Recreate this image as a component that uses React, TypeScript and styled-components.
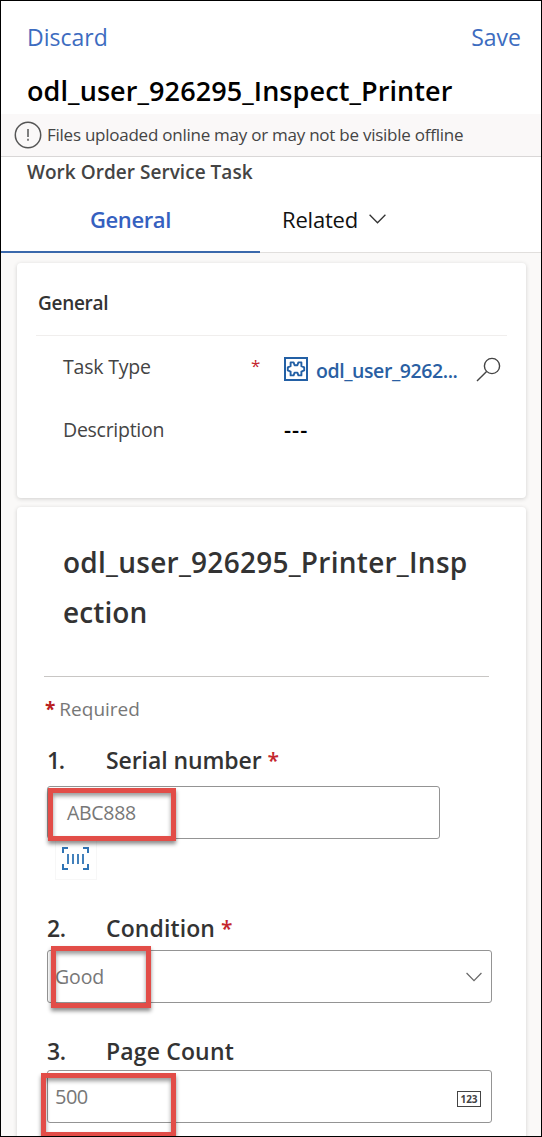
import React from "react";
import styled, { createGlobalStyle } from "styled-components";

const GlobalStyle = createGlobalStyle`
  * { box-sizing: border-box; }
  body { margin: 0; background: #fff; font-family: "Open Sans", "Noto Sans", sans-serif; }
`;

const Frame = styled.div`
  width: 542px;
  height: 1137px;
  border: 1px solid #000;
  overflow: hidden;
  background: #fff;
  display: flex;
  flex-direction: column;
`;

const Text = styled.span<{ $size: number; $line?: number; $track?: number; $weight?: number; $color?: string }>`
  display: block;
  white-space: nowrap;
  font-size: ${(p) => p.$size}px;
  line-height: ${(p) => p.$line ?? 26}px;
  letter-spacing: ${(p) => p.$track ?? 0}px;
  font-weight: ${(p) => p.$weight ?? 400};
  color: ${(p) => p.$color ?? "#444"};
`;

const Header = styled.header`
  height: 113px;
  flex: none;
  padding: 20px 20px 0 26px;
`;

const Actions = styled.div`
  display: flex;
  justify-content: space-between;
  margin-bottom: 19px;
`;

const Notice = styled.div`
  height: 43px;
  flex: none;
  display: flex;
  align-items: center;
  gap: 5px;
  padding-left: 13px;
  background: #faf8f8;
  border-bottom: 1px solid #d9d7d7;
`;

const Entity = styled.div`
  height: 28px;
  flex: none;
  padding: 2px 0 0 26px;
`;

const Tabs = styled.nav`
  height: 68px;
  flex: none;
  display: flex;
  border-bottom: 1px solid #e1dfdd;
`;

const Tab = styled.div<{ $active?: boolean }>`
  width: ${(p) => (p.$active ? 259 : 281)}px;
  height: 68px;
  display: flex;
  align-items: center;
  gap: 11px;
  padding-top: 1px;
  padding-left: ${(p) => (p.$active ? 89 : 22)}px;
  border-bottom: ${(p) => (p.$active ? "2px solid #3b69ac" : "2px solid transparent")};
`;

const Body = styled.main`
  flex: 1;
  display: flex;
  flex-direction: column;
  gap: 9px;
  padding: 10px 15px 0 16px;
  background: #faf9f8;
`;

const Card = styled.section<{ $height: number }>`
  height: ${(p) => p.$height}px;
  flex: none;
  background: #fff;
  border-radius: 4px;
  box-shadow: 0 1px 4px rgba(0, 0, 0, 0.17);
`;

const CardHeading = styled.div`
  height: 73px;
  margin: 0 19px 18px;
  padding: 27px 2px 0;
  border-bottom: 1px solid #f0eeed;
`;

const FieldRow = styled.div`
  height: 63px;
  display: grid;
  grid-template-columns: 188px 33px 1fr;
  padding-left: 46px;
`;

const Lookup = styled.div`
  display: flex;
  height: 30px;
  align-items: center;
`;

const LookupName = styled(Text)`
  margin: 3px 0 0 8px;
  width: 160px;
`;

const FormTitle = styled.h2`
  margin: 0 27px;
  padding: 30px 0 39px 19px;
  width: 445px;
  border-bottom: 1px solid #c8c6c4;
`;

const RequiredNote = styled.div`
  display: flex;
  gap: 4px;
  height: 47px;
  padding-left: 28px;
  margin-top: 20px;
`;

const Question = styled.div<{ $gap: number }>`
  display: grid;
  grid-template-columns: 59px auto 1fr;
  padding-left: 30px;
  margin-bottom: ${(p) => p.$gap}px;
`;

const InputBox = styled.div<{ $width: number; $indent: number }>`
  position: relative;
  width: ${(p) => p.$width}px;
  height: 53px;
  margin-left: 30px;
  padding: 0 ${(p) => (p.$width > 400 ? 9 : 11)}px 0 ${(p) => p.$indent}px;
  display: flex;
  align-items: center;
  justify-content: space-between;
  border: 1px solid #949494;
  border-radius: 3px;
`;

const Highlight = styled.div<{ $x: number; $y: number; $w: number; $h: number }>`
  position: absolute;
  left: ${(p) => p.$x}px;
  top: ${(p) => p.$y}px;
  width: ${(p) => p.$w}px;
  height: ${(p) => p.$h}px;
  border: 5px solid #e24d48;
  box-shadow: 0 3px 4px rgba(0, 0, 0, 0.45), inset 0 3px 4px rgba(0, 0, 0, 0.4);
`;

const ScanButton = styled.div`
  width: 42px;
  height: 41px;
  margin: 0 0 32px 38px;
  padding: 8px 0 0 6px;
  border: 1px solid #f7f7f7;
  border-top: 0;
`;

const Gap = styled.div`
  height: 32px;
`;

const Star = styled(Text)`
  margin-left: 6px;
`;

const Chevron = ({ color, width }: { color: string; width: number }) => (
  <svg width={width} height="10" viewBox="0 0 17 10" fill="none" stroke={color} strokeWidth="1.3">
    <path d="M.6.8 8.5 8.8 16.4.8" />
  </svg>
);

const InfoIcon = () => (
  <svg width="28" height="28" viewBox="0 0 28 28" fill="none" stroke="#555" strokeWidth="1.5">
    <circle cx="14" cy="14" r="12.7" />
    <path d="M14 8v8M14 17.8v2" />
  </svg>
);

const PuzzleIcon = () => (
  <svg width="24" height="24" viewBox="0 0 24 24" fill="none" stroke="#2360a5">
    <rect x="1" y="1" width="22" height="22" strokeWidth="2" />
    <path
      strokeWidth="1.9"
      strokeLinejoin="round"
      d="M6.6 5.4H9.6L10.6 8.2H13.4L14.4 5.4H17.4V9.2L20.2 10.4V13.4L17.4 14.6V18.4H14.4L13.4 15.6H10.6L9.6 18.4H6.6V14.6L3.8 13.4V10.4L6.6 9.2Z"
    />
  </svg>
);

const SearchIcon = () => (
  <svg width="25" height="25" viewBox="0 0 25 25" fill="none" stroke="#444" strokeWidth="1.4">
    <circle cx="16" cy="9" r="7.6" />
    <path d="M10.6 14.4 1 24" />
  </svg>
);

const ScanIcon = () => (
  <svg width="27" height="23" viewBox="0 0 27 23" fill="none" stroke="#2f74b5" strokeWidth="2">
    <path d="M6 1H1V6M21 1h5V6M6 22H1V17M21 22h5V17" />
    <path strokeWidth="1.8" d="M6 7v10M11 7v10M16 7v10M21 7v10" />
  </svg>
);

const NumberBadge = styled.span`
  width: 24px;
  height: 16px;
  border: 1.5px solid #444;
  margin: 4px 1px 0 0;
  font: 700 10px/14px "Open Sans", sans-serif;
  color: #444;
  text-align: center;
`;

export default function App() {
  return (
    <>
      <GlobalStyle />
      <Frame>
        <Header>
          <Actions>
            <Text $size={23} $line={32} $color="#3d6cc0">Discard</Text>
            <Text $size={23} $line={32} $color="#3d6cc0">Save</Text>
          </Actions>
          <Text $size={27} $line={38} $track={0.09} $weight={600} $color="#000">odl_user_926295_Inspect_Printer</Text>
        </Header>
        <Notice>
          <InfoIcon />
          <Text $size={17} $line={24} $track={-0.25}>Files uploaded online may or may not be visible offline</Text>
        </Notice>
        <Entity>
          <Text $size={19} $track={0.03} $weight={600}>Work Order Service Task</Text>
        </Entity>
        <Tabs>
          <Tab $active>
            <Text $size={22} $line={30} $track={-0.4} $weight={600} $color="#3560c0">General</Text>
          </Tab>
          <Tab>
            <Text $size={22} $line={30} $track={-0.2} $color="#111">Related</Text>
            <Chevron color="#333" width={17} />
          </Tab>
        </Tabs>
        <Body>
          <Card $height={235}>
            <CardHeading>
              <Text $size={19} $track={-0.3} $weight={600} $color="#333">General</Text>
            </CardHeading>
            <FieldRow>
              <Text $size={19.5} $track={-0.2}>Task Type</Text>
              <Text $size={17} $line={24} $color="#c4262e">*</Text>
              <Lookup>
                <PuzzleIcon />
                <LookupName $size={19.5} $track={-0.42} $weight={600} $color="#2a5fa3">odl_user_9262...</LookupName>
                <SearchIcon />
              </Lookup>
            </FieldRow>
            <FieldRow>
              <Text $size={19.5} $track={-0.27}>Description</Text>
              <span />
              <Text $size={22} $line={25} $track={1} $weight={600} $color="#000">---</Text>
            </FieldRow>
          </Card>
          <Card $height={660}>
            <FormTitle>
              <Text $size={28} $line={50} $track={0.26} $weight={600} $color="#333">odl_user_926295_Printer_Insp</Text>
              <Text $size={28} $line={50} $track={0.1} $weight={600} $color="#333">ection</Text>
            </FormTitle>
            <RequiredNote>
              <Text $size={19} $line={24} $weight={700} $color="#b92020">*</Text>
              <Text $size={19} $line={24} $color="#777">Required</Text>
            </RequiredNote>
            <Question $gap={10}>
              <Text $size={23} $line={32} $track={-1.5} $weight={600} $color="#333">1.</Text>
              <Text $size={23} $line={32} $track={-0.08} $weight={600} $color="#333">Serial number</Text>
              <Star $size={21} $line={32} $weight={600} $color="#c4262e">*</Star>
            </Question>
            <InputBox $width={393} $indent={19}>
              <Text $size={19.5} $track={-0.3} $color="#777">ABC888</Text>
              <Highlight $x={0} $y={1} $w={128} $h={53} />
            </InputBox>
            <ScanButton>
              <ScanIcon />
            </ScanButton>
            <Question $gap={6}>
              <Text $size={23} $line={32} $track={-0.5} $weight={600} $color="#333">2.</Text>
              <Text $size={23} $line={32} $track={0.1} $weight={600} $color="#333">Condition</Text>
              <Star $size={21} $line={32} $weight={600} $color="#c4262e">*</Star>
            </Question>
            <InputBox $width={445} $indent={7}>
              <Text $size={19.5} $line={28} $track={-0.1} $color="#777">Good</Text>
              <Chevron color="#666" width={16} />
              <Highlight $x={3} $y={-5} $w={100} $h={62} />
            </InputBox>
            <Gap />
            <Question $gap={3}>
              <Text $size={23} $line={32} $track={-0.5} $weight={600} $color="#333">3.</Text>
              <Text $size={23} $line={32} $track={0.15} $weight={600} $color="#333">Page Count</Text>
            </Question>
            <InputBox $width={445} $indent={7}>
              <Text $size={20} $line={29} $track={-0.5} $color="#777">500</Text>
              <NumberBadge>123</NumberBadge>
              <Highlight $x={-7} $y={2} $w={135} $h={64} />
            </InputBox>
          </Card>
        </Body>
      </Frame>
    </>
  );
}
